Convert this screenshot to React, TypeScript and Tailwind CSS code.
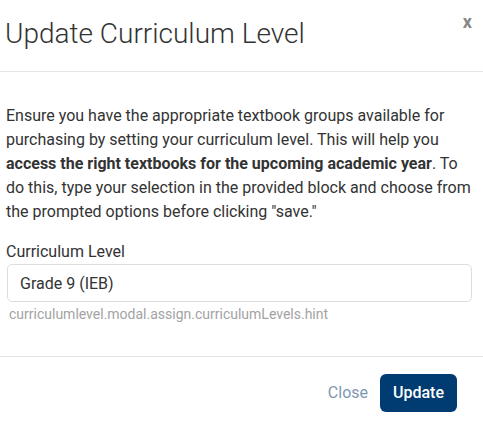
export default function App() {
  return (
    <div className="w-[483px] h-[436px] bg-white text-[#333] font-['Roboto',sans-serif] overflow-hidden">
      {/* Header */}
      <div className="h-[72px] border-b border-[#e5e5e5] flex items-start justify-between pl-[5px] pr-[11px]">
        <h2 className="pt-[16px] text-[28px] leading-[36px] font-light">Update Curriculum Level</h2>
        <button className="mt-[11px] text-[18px] leading-[22px] font-bold text-[#888]">x</button>
      </div>

      {/* Body */}
      <div className="pl-[6px] pr-[12px] pt-[32px] h-[285px] border-b border-[#e5e5e5]">
        <p className="text-[16px] leading-[24px]">
          Ensure you have the appropriate textbook groups available for purchasing by setting your curriculum level.
          This will help you <strong className="font-bold">access the right textbooks for the upcoming academic year</strong>.
          To do this, type your selection in the provided block and choose from the prompted options before clicking "save."
        </p>
        <label className="block mt-4 text-[16px] leading-[24px]">Curriculum Level</label>
        <input
          readOnly
          value="Grade 9 (IEB)"
          className="block w-full h-[38px] ml-[1px] px-[12px] border border-[#dedede] rounded-[5px] text-[16px] text-[#333] outline-none"
        />
        <p className="mt-[2px] pl-[3px] text-[14px] leading-[20px] text-[#a3a3a3]">
          curriculumlevel.modal.assign.curriculumLevels.hint
        </p>
      </div>

      {/* Footer */}
      <div className="flex items-center justify-end gap-[12px] pt-[17px] pr-[26px]">
        <button className="text-[16px] text-[#7f98b2]">Close</button>
        <button className="h-[38px] w-[77px] rounded-[6px] bg-[#003b71] text-white text-[16px] font-medium">Update</button>
      </div>
    </div>
  );
}
